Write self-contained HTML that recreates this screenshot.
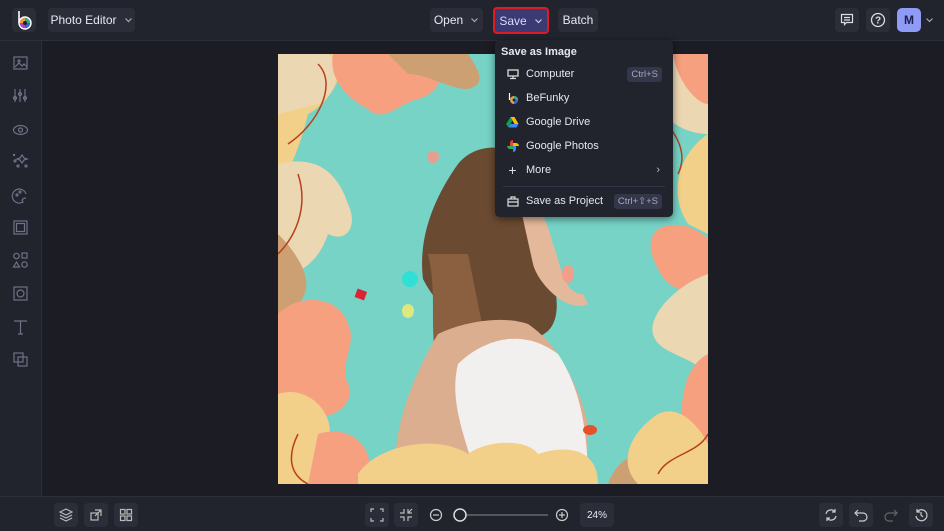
<!DOCTYPE html>
<html><head><meta charset="utf-8"><style>
*{box-sizing:border-box;margin:0;padding:0}
body{width:944px;height:531px;overflow:hidden;background:#1b1c24;font-family:"Liberation Sans",sans-serif;position:relative;color:#e6e7ee}
.top{position:absolute;left:0;top:0;width:944px;height:41px;background:#21232d;border-bottom:1px solid #2c2e38}
.side{position:absolute;left:0;top:41px;width:42px;height:455px;background:#21232d;border-right:1px solid #2a2c36}
.bot{position:absolute;left:0;top:496px;width:944px;height:35px;background:#21232d;border-top:1px solid #2c2e38}
.btn{position:absolute;background:#2b2d39;border-radius:4px;font-size:12px;color:#e8e9f0;display:flex;align-items:center;justify-content:center}
.ib{position:absolute;width:24px;height:24px;background:#2b2d39;border-radius:4px;display:flex;align-items:center;justify-content:center}
svg.i{stroke:#6f7288;fill:none;stroke-width:1.2}
.menu{position:absolute;left:495px;top:40px;width:178px;height:177px;background:#21232d;border-radius:5px;box-shadow:0 2px 8px rgba(0,0,0,.5)}
.mi{position:absolute;left:0;width:178px;height:22px;font-size:11px;display:flex;align-items:center}
.mi .ic{width:31px;display:flex;justify-content:center;padding-left:4px}
.kb{position:absolute;right:11px;background:#34364a;color:#a6a8bb;font-size:9.5px;padding:2px 4px;border-radius:3px}
.chev{display:inline-block;width:9px;height:6px;margin-left:7px}
</style></head><body>
<div class="top">
 <div class="ib" style="left:12px;top:8px;width:24px;height:24px"><svg width="18" height="20" viewBox="0 0 18 20"><path d="M4 1v12" stroke="#fff" stroke-width="1.6"/><circle cx="10" cy="13" r="5.5" fill="#e94"/><path d="M10 13L10 7.5A5.5 5.5 0 0 1 15.5 13Z" fill="#3a8"/><path d="M10 13L15.5 13A5.5 5.5 0 0 1 10 18.5Z" fill="#36c"/><path d="M10 13L10 18.5A5.5 5.5 0 0 1 4.5 13Z" fill="#a4c"/><circle cx="10" cy="13" r="2" fill="#222"/><circle cx="10" cy="13" r="6" fill="none" stroke="#fff" stroke-width="1.4"/></svg></div>
 <div class="btn" style="left:48px;top:8px;width:87px;height:24px">Photo Editor<svg class="chev" viewBox="0 0 9 6"><path d="M1.5 1.5l3 3 3-3" stroke="#aaa" fill="none" stroke-width="1.2"/></svg></div>
 <div class="btn" style="left:430px;top:8px;width:53px;height:24px">Open<svg class="chev" viewBox="0 0 9 6"><path d="M1.5 1.5l3 3 3-3" stroke="#aaa" fill="none" stroke-width="1.2"/></svg></div>
 <div class="btn" style="left:493px;top:7px;width:56px;height:27px;background:#3b3a72;border:2px solid #e01b24;color:#d9dbff">Save<svg class="chev" viewBox="0 0 9 6"><path d="M1.5 1.5l3 3 3-3" stroke="#ccd" fill="none" stroke-width="1.2"/></svg></div>
 <div class="btn" style="left:558px;top:8px;width:40px;height:24px">Batch</div>
 <div class="ib" style="left:835px;top:8px"><svg class="i" width="14" height="14" viewBox="0 0 14 14" style="stroke:#ddd"><path d="M1.5 1.5h11v8h-6l-2 2v-2h-3z M4 4.5h6 M4 7h6"/></svg></div>
 <div class="ib" style="left:866px;top:8px"><svg width="16" height="16" viewBox="0 0 16 16"><circle cx="8" cy="8" r="6.5" fill="none" stroke="#ddd" stroke-width="1.3"/><text x="8" y="11.5" font-size="10" text-anchor="middle" fill="#ddd" font-family="Liberation Sans" font-weight="bold">?</text></svg></div>
 <div style="position:absolute;left:897px;top:8px;width:24px;height:24px;border-radius:5px;background:#8f9bf5;color:#1c1f4a;font-size:12px;font-weight:bold;display:flex;align-items:center;justify-content:center">M</div>
 <svg style="position:absolute;left:925px;top:17px" width="9" height="6" viewBox="0 0 9 6"><path d="M1.5 1.5l3 3 3-3" stroke="#aaa" fill="none" stroke-width="1.2"/></svg>
</div>
<div class="side">
 <svg class="i" width="42" height="330" viewBox="0 0 42 330" style="position:absolute;left:0;top:0">
  <rect x="14" y="16" width="13" height="12"/><path d="M15 26l4-4 3 3 2-2 3 3"/><circle cx="19" cy="20" r="1"/>
  <path d="M15 48v13M20 48v13M25 48v13"/><circle cx="15" cy="57" r="1.5"/><circle cx="20" cy="53" r="1.5"/><circle cx="25" cy="57" r="1.5"/>
  <ellipse cx="20.5" cy="89" rx="7" ry="4.5"/><circle cx="20.5" cy="89" r="2"/>
  <path d="M22 114l2 3 3 1-3 1-2 3-2-3-3-1 3-1z"/><circle cx="15" cy="120" r="1"/><circle cx="18" cy="125" r="1"/><circle cx="26" cy="125" r="1"/><circle cx="14" cy="114" r=".6"/>
  <path d="M26 153a7 7 0 1 0-3 8c-2-2 0-4 3-4"/><circle cx="17" cy="154" r="1"/><circle cx="20" cy="151" r="1"/>
  <rect x="14" y="180" width="13" height="13"/><rect x="16.5" y="182.5" width="8" height="8"/>
  <circle cx="16.5" cy="215" r="2.7"/><rect x="22" y="212" width="5" height="5"/><path d="M16.5 221l3 5h-6z"/><circle cx="24.5" cy="223.5" r="2.7"/>
  <rect x="14" y="246" width="13" height="13"/><circle cx="20.5" cy="252.5" r="3.5"/>
  <path d="M14 280h13M20.5 280v13M18 293h5"/>
  <rect x="14" y="312" width="9" height="9"/><rect x="18" y="316" width="9" height="9"/>
 </svg>
</div>
<svg style="position:absolute;left:278px;top:54px" width="430" height="430" viewBox="0 0 430 430">
 <rect width="430" height="430" fill="#76d3c6"/>
 <path d="M0 0h60c10 20-10 50-30 60-10 40-20 60-30 70z" fill="#f2d08a"/>
 <path d="M0 0h50c15 10 10 40-10 50L0 60z" fill="#ecd7b3"/>
 <path d="M55 0h105c10 20 0 40-20 45-20 5-35 25-50 10-20-10-40-30-35-55z" fill="#f6a07f"/>
 <path d="M110 0h80c10 15 20 30 0 35-20 0-40-15-60-15z" fill="#cda074"/>
 <path d="M0 110c40-10 60 10 70 40 10 20 0 40-20 30-10 30-30 40-50 45z" fill="#ecd7b3"/>
 <path d="M0 180c20 20 40 50 20 70-10 10-20 10-20 10z" fill="#cda074"/>
 <path d="M0 260c20-20 60-20 70 10 10 20-10 40 0 60 10 20-20 40-40 30L0 350z" fill="#f6a07f"/>
 <path d="M0 340c30-10 60 20 50 50 20 10 20 40 0 40H0z" fill="#f2d08a"/>
 <path d="M40 380c30-10 60 10 50 50H30z" fill="#f6a07f"/>
 <path d="M360 0h70v80c-20 0-40-10-50-30-15-10-25-30-20-50z" fill="#ecd7b3"/>
 <path d="M395 0h35v50c-10 0-30-20-35-50z" fill="#f6a07f"/>
 <path d="M430 80c-30 20-40 60-20 90 20 10 20 10 20 10z" fill="#f2d08a"/>
 <path d="M380 175c20-10 40 0 50 10v40c-20 20-40 10-50-10-10-20-10-30 0-40z" fill="#f6a07f"/>
 <path d="M430 220c-30 10-60 40-55 60 5 20 35 20 55 40z" fill="#ecd7b3"/>
 <path d="M430 300c-20 10-30 40-25 80-20 10-30 30-10 50h35z" fill="#f6a07f"/>
 <path d="M10 90c30-20 50-60 30-80M0 200c20-20 30-50 20-80M380 60c20 20 30 40 20 60M20 380c-10 20-10 40 10 50" stroke="#b8401d" stroke-width="1.5" fill="none"/>
 <path d="M180 110c20-25 60-20 75 5 10 30 5 80 20 110 10 40 0 60-30 60-40 0-80-20-100-60-5-40 10-80 35-115z" fill="#6b4a32"/>
 <path d="M150 200c10 40 0 80 10 110 20 0 40-5 50-10l-20-100z" fill="#8a6040"/>
 <path d="M235 120c20 10 35 50 40 70 8 20 10 50 30 50l5 10c-20 10-50-20-55-40z" fill="#e4b89a"/>
 <path d="M160 280c20-10 60-20 90-10 30 20 50 60 60 100v60H120c-10-40 10-100 40-150z" fill="#dcae90"/>
 <path d="M180 310c20-20 60-40 100-10 20 30 30 70 30 130H200c-10-40-30-80-20-120z" fill="#f1f0ee"/>
 <path d="M80 420c20-30 80-40 110-20 20-15 60-15 70 0 30-10 60-5 60 30H80z" fill="#f2d08a"/>
 <path d="M330 430c10-30 40-40 60-20l0 20z" fill="#cda074"/>
 <path d="M380 360c20-10 40 10 50 30v40h-70c-20-20-10-50 20-70z" fill="#f2d08a"/>
 <path d="M380 420c10-20 40-20 50-40" stroke="#b8401d" stroke-width="1.5" fill="none"/>
 <circle cx="132" cy="225" r="8" fill="#2fe0d4"/><circle cx="155" cy="103" r="6" fill="#e69f8f"/>
 <rect x="78" y="236" width="10" height="9" fill="#d23" transform="rotate(20 83 240)"/>
 <ellipse cx="130" cy="257" rx="6" ry="7" fill="#dfe87f"/><ellipse cx="290" cy="220" rx="6" ry="9" fill="#f0a08a"/>
 <ellipse cx="312" cy="376" rx="7" ry="5" fill="#e8502a"/>
</svg>
<div class="menu">
 <div style="position:absolute;left:6px;top:6px;font-size:11px;font-weight:bold">Save as Image</div>
 <div class="mi" style="top:23px"><span class="ic"><svg width="12" height="11" viewBox="0 0 12 11"><rect x="1" y="1" width="10" height="6" fill="none" stroke="#ddd" stroke-width="1.3"/><path d="M6 7v2M3 9.5h6" stroke="#ddd" stroke-width="1.3"/></svg></span>Computer<span class="kb">Ctrl+S</span></div>
 <div class="mi" style="top:47px"><span class="ic"><svg width="12" height="13" viewBox="0 0 12 13"><circle cx="7" cy="8" r="4" fill="#e94"/><path d="M7 8V4a4 4 0 0 1 4 4z" fill="#3a8"/><path d="M7 8h4a4 4 0 0 1-4 4z" fill="#36c"/><path d="M2.5 1v7" stroke="#fff" stroke-width="1.2"/><circle cx="7" cy="8" r="1.4" fill="#222"/></svg></span>BeFunky</div>
 <div class="mi" style="top:71px"><span class="ic"><svg width="13" height="11" viewBox="0 0 13 11"><path d="M4.5 0h4l4 7h-4z" fill="#fbbc04"/><path d="M4.5 0l2 3.5-4 7L0 7z" fill="#0f9d58"/><path d="M2.5 10.5l2-3.5h8l-2 3.5z" fill="#4285f4"/></svg></span>Google Drive</div>
 <div class="mi" style="top:95px"><span class="ic"><svg width="12" height="12" viewBox="0 0 12 12"><path d="M6 6V0a3 3 0 0 0-3 3v3z" fill="#ea4335"/><path d="M6 6h6a3 3 0 0 0-3-3H6z" fill="#fbbc04"/><path d="M6 6v6a3 3 0 0 0 3-3V6z" fill="#4285f4"/><path d="M6 6H0a3 3 0 0 0 3 3h3z" fill="#34a853"/></svg></span>Google Photos</div>
 <div class="mi" style="top:119px"><span class="ic" style="font-size:14px;color:#ddd">+</span>More<span style="position:absolute;right:13px;color:#bbb">›</span></div>
 <div style="position:absolute;left:8px;right:8px;top:146px;border-top:1px solid #33354a"></div>
 <div class="mi" style="top:150px"><span class="ic"><svg width="12" height="11" viewBox="0 0 12 11"><rect x="1" y="3" width="10" height="7" fill="none" stroke="#ddd" stroke-width="1.2"/><path d="M4 3V1h4v2M1 6h10" stroke="#ddd" stroke-width="1.2" fill="none"/></svg></span>Save as Project<span class="kb">Ctrl+⇧+S</span></div>
</div>
<div class="bot">
 <div class="ib" style="left:54px;top:6px"><svg class="i" width="14" height="14" viewBox="0 0 14 14" style="stroke:#bbb"><path d="M7 1l6 3-6 3-6-3z M1 7l6 3 6-3 M1 10l6 3 6-3"/></svg></div>
 <div class="ib" style="left:84px;top:6px"><svg class="i" width="14" height="14" viewBox="0 0 14 14" style="stroke:#bbb"><rect x="2" y="5" width="7" height="7"/><path d="M6 2h6v6M12 2L6 8"/></svg></div>
 <div class="ib" style="left:114px;top:6px"><svg class="i" width="14" height="14" viewBox="0 0 14 14" style="stroke:#bbb"><rect x="1.5" y="1.5" width="4.5" height="4.5"/><rect x="8" y="1.5" width="4.5" height="4.5"/><rect x="1.5" y="8" width="4.5" height="4.5"/><rect x="8" y="8" width="4.5" height="4.5"/></svg></div>
 <div class="ib" style="left:365px;top:6px"><svg class="i" width="14" height="14" viewBox="0 0 14 14" style="stroke:#bbb"><path d="M1 4V1h3M10 1h3v3M13 10v3h-3M4 13H1v-3"/></svg></div>
 <div class="ib" style="left:394px;top:6px"><svg class="i" width="14" height="14" viewBox="0 0 14 14" style="stroke:#bbb"><path d="M1 5h4V1M9 1v4h4M13 9H9v4M5 13V9H1M9 5l4-4"/></svg></div>
 <svg width="140" height="24" style="position:absolute;left:428px;top:6px"><circle cx="8" cy="12" r="5.5" fill="none" stroke="#ccc" stroke-width="1.2"/><path d="M5 12h6" stroke="#ccc" stroke-width="1.2"/><path d="M38 12h82" stroke="#888" stroke-width="1"/><circle cx="32" cy="12" r="6" fill="#21232d" stroke="#ddd" stroke-width="1.5"/><circle cx="134" cy="12" r="5.5" fill="none" stroke="#ccc" stroke-width="1.2"/><path d="M131 12h6M134 9v6" stroke="#ccc" stroke-width="1.2"/></svg>
 <div class="btn" style="left:580px;top:6px;width:34px;height:24px;font-size:10px">24%</div>
 <div class="ib" style="left:819px;top:6px"><svg class="i" width="14" height="14" viewBox="0 0 14 14" style="stroke:#ccc"><path d="M11 4a5 5 0 0 0-9 2M3 10a5 5 0 0 0 9-2M11 1v3H8M3 13v-3h3"/></svg></div>
 <div class="ib" style="left:849px;top:6px"><svg class="i" width="14" height="14" viewBox="0 0 14 14" style="stroke:#ccc"><path d="M4 2L1 5l3 3M1 5h8a4 4 0 0 1 0 8H5"/></svg></div>
 <div style="position:absolute;left:879px;top:6px;width:24px;height:24px;display:flex;align-items:center;justify-content:center"><svg class="i" width="14" height="14" viewBox="0 0 14 14" style="stroke:#666"><path d="M10 2l3 3-3 3M13 5H5a4 4 0 0 0 0 8h4"/></svg></div>
 <div class="ib" style="left:909px;top:6px"><svg class="i" width="14" height="14" viewBox="0 0 14 14" style="stroke:#ccc"><path d="M3 4a5.5 5.5 0 1 1-1 4M3 1v3h3M7 4v3l2 2"/></svg></div>
</div>
</body></html>
